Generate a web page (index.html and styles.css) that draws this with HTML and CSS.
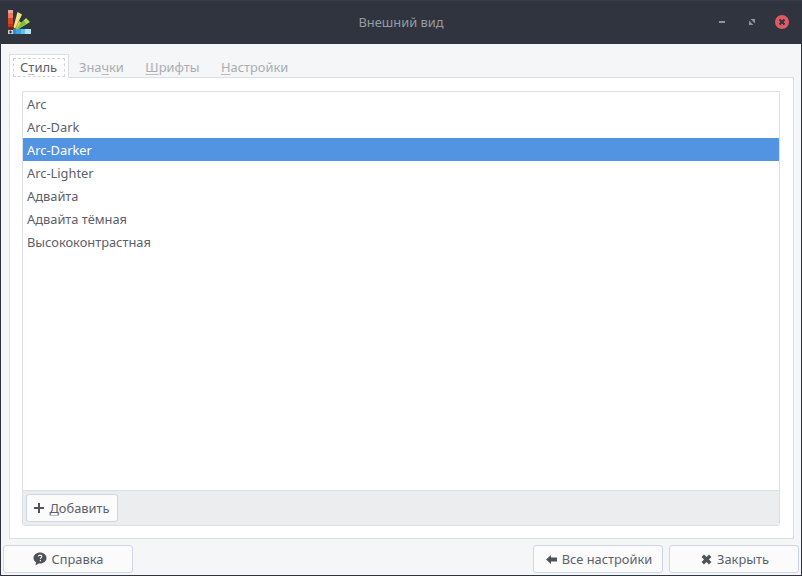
FILE: index.html
```html
<!DOCTYPE html>
<html lang="ru">
<head>
    <meta charset="UTF-8">
    <title>Внешний вид</title>
    <link rel="stylesheet" href="styles.css">
</head>

<body>
    <div class="window">

        <!-- Title bar -->
        <header class="titlebar">
            <svg class="app-icon" width="24" height="24" viewBox="0 0 24 24">
                <rect x="0" y="0" width="5" height="3" fill="#e8a59a"/>
                <rect x="0" y="3" width="5" height="5" fill="#ea7a62"/>
                <rect x="0" y="8" width="5" height="6" fill="#d9432c"/>
                <rect x="0" y="14" width="5" height="3" fill="#b23a24"/>
                <rect x="0" y="17" width="5" height="3" fill="#6e2418"/>
                <polygon points="9.500,2 14,4.500 7,19 5.500,17" fill="#f1e386"/>
                <polygon points="8,17 11,11 14,13 9,19" fill="#e9c83c"/>
                <polygon points="18,8 22,12 9,20 7.500,19" fill="#b4dc58"/>
                <polygon points="13,13 16,10.500 18,13.500 10,19.500 9,18.500" fill="#74c043"/>
                <rect x="0" y="20" width="5" height="4" fill="#c9ccd2"/>
                <rect x="5" y="19" width="3" height="5" fill="#2a8fd0"/>
                <rect x="8" y="19" width="5" height="5" fill="#3da5e0"/>
                <rect x="13" y="19" width="4" height="5" fill="#62c2ec"/>
                <rect x="17" y="19" width="6" height="5" fill="#b5e2f2"/>
                <rect x="1" y="21.500" width="3" height="1" fill="#2f343f"/>
                <rect x="2" y="20.500" width="1" height="3" fill="#2f343f"/>
            </svg>
            <span class="title">Внешний вид</span>
            <div class="win-controls">
                <span class="win-min"></span>
                <svg class="win-max" width="6" height="6" viewBox="0 0 6 6">
                    <polygon points="1.500,0 6,0 6,4.500" fill="#8f939d"/>
                    <polygon points="0,1.500 4.500,6 0,6" fill="#8f939d"/>
                </svg>
                <svg class="win-close" width="14" height="14" viewBox="0 0 14 14">
                    <circle cx="7" cy="7" r="7" fill="#e05a62"/>
                    <path d="M4.500 4.500l5 5M9.500 4.500l-5 5" stroke="#2f343f" stroke-width="2"/>
                </svg>
            </div>
        </header>

        <div class="content">
            <!-- Tabs -->
            <nav class="tabs">
                <a class="tab active"><span class="focus">С<u>т</u>иль</span></a>
                <a class="tab">Зна<u>ч</u>ки</a>
                <a class="tab"><u>Ш</u>рифты</a>
                <a class="tab"><u>Н</u>астройки</a>
            </nav>

            <section class="page">
                <div class="list-frame">
                    <ul class="theme-list">
                        <li>Arc</li>
                        <li>Arc-Dark</li>
                        <li class="selected">Arc-Darker</li>
                        <li>Arc-Lighter</li>
                        <li>Адвайта</li>
                        <li>Адвайта тёмная</li>
                        <li>Высококонтрастная</li>
                    </ul>
                    <div class="list-toolbar">
                        <button class="btn btn-add">
                            <svg width="10" height="10" viewBox="0 0 10 10"><path d="M4 0h2v4h4v2h-4v4h-2v-4h-4v-2h4z" fill="#4f525b"/></svg>
                            <span><u>Д</u>обавить</span>
                        </button>
                    </div>
                </div>
            </section>

            <!-- Bottom buttons -->
            <footer class="actions">
                <button class="btn btn-wide">
                    <svg width="14" height="14" viewBox="0 0 14 14">
                        <path d="M7 0.500c3.600 0 6.500 2.400 6.500 5.500s-2.900 5.500-6.500 5.500c-0.500 0-1 0-1.500-0.100l-3 2.100 0.500-3.200c-1.500-1-2.500-2.600-2.500-4.300 0-3.100 2.900-5.500 6.500-5.500z" fill="#4f525b"/>
                        <path d="M5.300 4.500c0.200-1 0.900-1.400 1.800-1.400s1.700 0.500 1.700 1.400c0 1.200-1.400 1.200-1.400 2.400M7.400 8v1.300" stroke="#f5f6f7" stroke-width="1.100" fill="none"/>
                    </svg>
                    <span>Справка</span>
                </button>
                <div class="actions-right">
                    <button class="btn btn-wide">
                        <svg width="11" height="9" viewBox="0 0 11 9"><path d="M0 4.500l5-4.500v2.500h6v4h-6v2.500z" fill="#4f525b"/></svg>
                        <span>Все настройки</span>
                    </button>
                    <button class="btn btn-wide">
                        <svg width="11" height="11" viewBox="0 0 11 11"><path d="M1.800 1.800l7.400 7.400M9.200 1.800l-7.400 7.400" stroke="#4f525b" stroke-width="3.400"/></svg>
                        <span>Закрыть</span>
                    </button>
                </div>
            </footer>
        </div>
    </div>
</body>
</html>
```

FILE: styles.css
```css
/* Reset */
* { margin: 0; padding: 0; box-sizing: border-box; }

body {
    width: 802px;
    height: 576px;
    overflow: hidden;
    font-family: "Noto Sans", sans-serif;
    font-size: 12.85px;
    color: #5c616c;
    background: #2f343f;
}

u {
    text-underline-offset: 2px;
    text-decoration-color: #b9bbc0;
}

.window {
    height: 576px;
    display: flex;
    flex-direction: column;
}

/* Title bar */
.titlebar {
    height: 44px;
    flex: none;
    padding: 9px 13px 0 8px;
    display: flex;
    align-items: flex-start;
    position: relative;
    background: #2f343f;
    border-top: 1px solid #383c4a;
}

.title {
    position: absolute;
    left: 0;
    right: 0;
    top: 12px;
    text-align: center;
    color: #989ba3;
}

.win-controls {
    margin-left: auto;
    margin-top: 5px;
    display: flex;
    align-items: center;
    gap: 24px;
}

.win-min {
    width: 6px;
    height: 2px;
    background: #8f939d;
}

.win-close {
    margin-left: -4px;
}

/* Main area */
.content {
    flex: 1;
    margin: 0 1px 1px;
    padding: 10px 2px 2px;
    display: flex;
    flex-direction: column;
    background: #f5f6f7;
}

.tabs {
    height: 24px;
    margin-left: 6px;
    display: flex;
    position: relative;
    z-index: 1;
}

.tab {
    height: 24px;
    padding: 4px 10px 0;
    color: #a9acb2;
}

.tab + .tab + .tab {
    margin-left: 1.5px;
}

.tab.active {
    width: 60px;
    padding: 3px;
    font-size: 13px;
    color: #5c616c;
    background: #fff;
    border: 1px solid #dcdfe3;
    border-bottom: none;
}

.focus {
    display: block;
    height: 19px;
    line-height: 17px;
    padding-left: 6px;
    border: 1px dashed #d2d4d7;
}

.page {
    width: 785px;
    height: 462px;
    margin-left: 6px;
    margin-top: -1px;
    padding: 13px 13px 12px 12px;
    background: #fff;
    border: 1px solid #dcdfe3;
}

.list-frame {
    height: 100%;
    display: flex;
    flex-direction: column;
    border: 1px solid #dcdfe3;
    border-radius: 0 0 3px 3px;
}

.theme-list {
    flex: 1;
    list-style: none;
    background: #fff;
}

.theme-list li {
    height: 23px;
    line-height: 25px;
    padding-left: 4px;
    overflow: hidden;
}

.theme-list li.selected {
    background: #5294e2;
    color: #fff;
}

.list-toolbar {
    height: 35px;
    padding: 3px;
    background: #ecedef;
    border-top: 1px solid #dcdfe3;
}

/* Buttons */
.btn {
    display: flex;
    align-items: center;
    justify-content: center;
    gap: 5px;
    height: 28px;
    font-family: inherit;
    font-size: 12.85px;
    color: #5c616c;
    background: #fbfbfc;
    border: 1px solid #cfd6e6;
    border-radius: 3px;
}

.btn-add {
    width: 92px;
}

.btn-wide {
    width: 130px;
}

.actions {
    margin-top: 6px;
    display: flex;
    justify-content: space-between;
}

.actions-right {
    display: flex;
    gap: 6px;
}

.actions-right .btn {
    padding-left: 2px;
}
```
